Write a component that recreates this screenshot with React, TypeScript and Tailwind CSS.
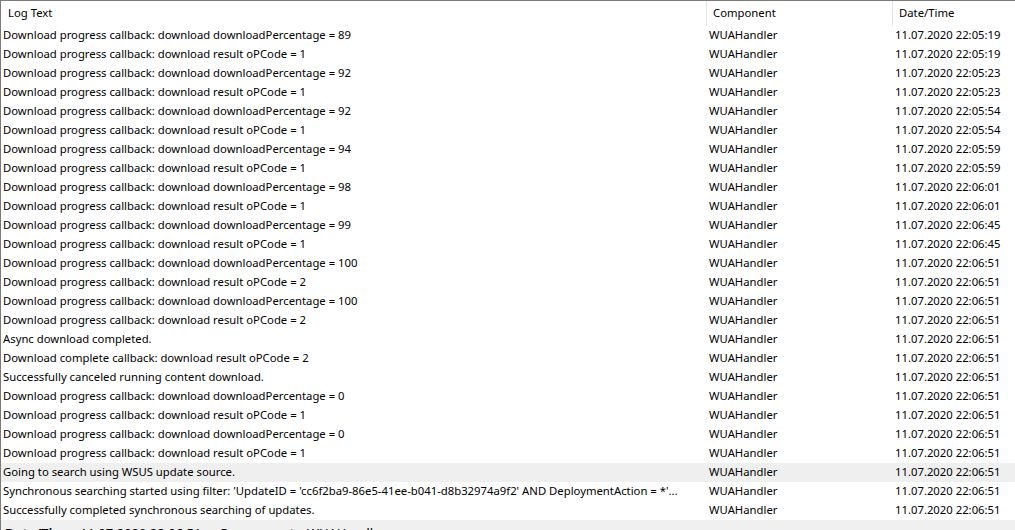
const DL = 'Download progress callback: download ';

type Row = { text: string; time: string };

const rows: Row[] = [
  { text: DL + 'downloadPercentage = 89', time: '22:05:19' },
  { text: DL + 'result oPCode = 1', time: '22:05:19' },
  { text: DL + 'downloadPercentage = 92', time: '22:05:23' },
  { text: DL + 'result oPCode = 1', time: '22:05:23' },
  { text: DL + 'downloadPercentage = 92', time: '22:05:54' },
  { text: DL + 'result oPCode = 1', time: '22:05:54' },
  { text: DL + 'downloadPercentage = 94', time: '22:05:59' },
  { text: DL + 'result oPCode = 1', time: '22:05:59' },
  { text: DL + 'downloadPercentage = 98', time: '22:06:01' },
  { text: DL + 'result oPCode = 1', time: '22:06:01' },
  { text: DL + 'downloadPercentage = 99', time: '22:06:45' },
  { text: DL + 'result oPCode = 1', time: '22:06:45' },
  { text: DL + 'downloadPercentage = 100', time: '22:06:51' },
  { text: DL + 'result oPCode = 2', time: '22:06:51' },
  { text: DL + 'downloadPercentage = 100', time: '22:06:51' },
  { text: DL + 'result oPCode = 2', time: '22:06:51' },
  { text: 'Async download completed.', time: '22:06:51' },
  { text: 'Download complete callback: download result oPCode = 2', time: '22:06:51' },
  { text: 'Successfully canceled running content download.', time: '22:06:51' },
  { text: DL + 'downloadPercentage = 0', time: '22:06:51' },
  { text: DL + 'result oPCode = 1', time: '22:06:51' },
  { text: DL + 'downloadPercentage = 0', time: '22:06:51' },
  { text: DL + 'result oPCode = 1', time: '22:06:51' },
  { text: 'Going to search using WSUS update source.', time: '22:06:51' },
  {
    text: "Synchronous searching started using filter: 'UpdateID = 'cc6f2ba9-86e5-41ee-b041-d8b32974a9f2' AND DeploymentAction = *'...",
    time: '22:06:51',
  },
  { text: 'Successfully completed synchronous searching of updates.', time: '22:06:51' },
];

const SELECTED = 23;

export default function App() {
  return (
    <div className="w-[1015px] h-[530px] overflow-hidden bg-white border-l border-t border-[#7a7a7a] text-[11.3px] text-black font-['Noto_Sans','Liberation_Sans',sans-serif] flex flex-col">
      {/* column header */}
      <div className="flex h-[25px] shrink-0 items-center">
        <div className="w-[705px] pl-[7px]">Log Text</div>
        <div className="w-[186px] pl-[6px] border-l border-[#e5e5e5] h-full flex items-center">Component</div>
        <div className="flex-1 pl-[6px] border-l border-[#e5e5e5] h-full flex items-center">Date/Time</div>
      </div>

      {/* log rows */}
      <div className="flex flex-col shrink-0">
        {rows.map((row, i) => (
          <div
            key={i}
            className={`flex h-[19px] items-center ${i === SELECTED ? 'bg-[#efefef]' : ''}`}
          >
            <div className="w-[706px] pl-[2px] pr-[20px] whitespace-nowrap overflow-hidden text-ellipsis">{row.text}</div>
            <div className="w-[186px] pl-[2px]">WUAHandler</div>
            <div className="flex-1 pl-[2px] whitespace-nowrap">11.07.2020 {row.time}</div>
          </div>
        ))}
      </div>

      {/* details pane (cut off) */}
      <div className="flex-1 bg-[#f0f0f0] pt-[4px] pl-[4px] flex text-[13px] leading-[18px] whitespace-nowrap">
        <span className="font-bold w-[75px]">Date/Time:</span>
        <span className="w-[139px]">11.07.2020 22:06:51</span>
        <span className="font-bold w-[88px]">Component:</span>
        <span>WUAHandler</span>
      </div>
    </div>
  );
}
